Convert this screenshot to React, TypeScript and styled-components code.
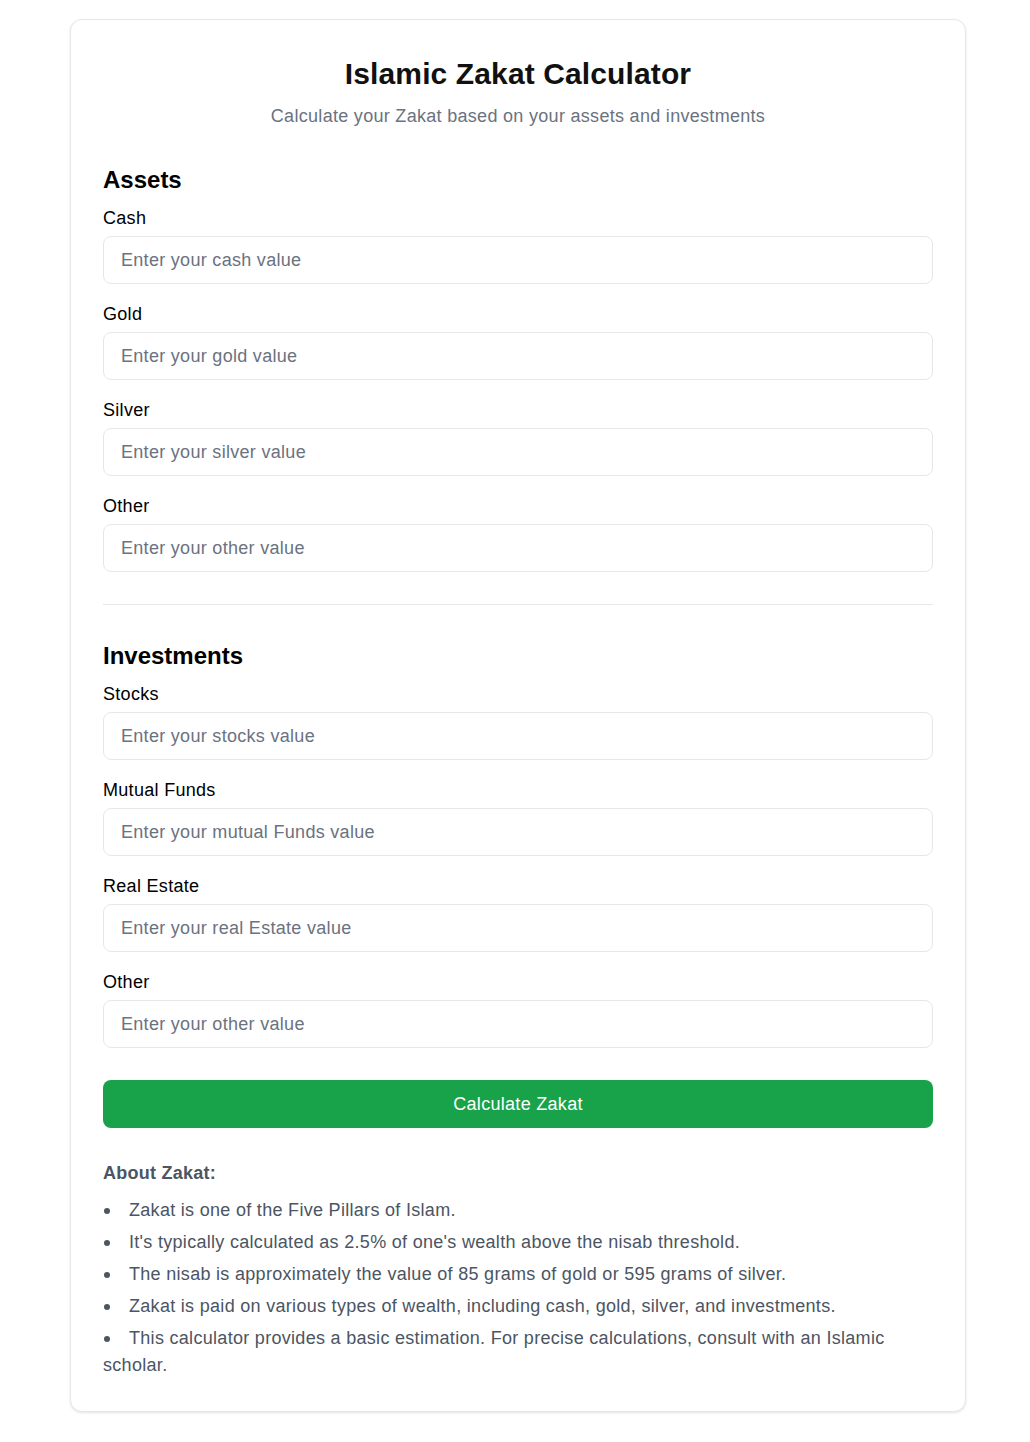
import React from "react";
import styled, { createGlobalStyle } from "styled-components";

const GlobalStyle = createGlobalStyle`
  * { box-sizing: border-box; }
  body {
    margin: 0;
    background: #ffffff;
    font-family: "Liberation Sans", Arial, Helvetica, sans-serif;
  }
`;

const Page = styled.div`
  display: flex;
  justify-content: center;
  padding: 19px 64px 30px 70px;
`;

const Card = styled.div`
  width: 100%;
  max-width: 896px;
  background: #ffffff;
  border: 1px solid #e5e7eb;
  border-radius: 12px;
  box-shadow: 0 1px 3px rgba(0, 0, 0, 0.08), 0 1px 2px rgba(0, 0, 0, 0.04);
  padding: 36px 32px 32px;
`;

const Header = styled.header`
  text-align: center;
  margin-bottom: 34px;
`;

const Title = styled.h1`
  margin: 0 0 10px;
  font-size: 30px;
  line-height: 36px;
  font-weight: 700;
  letter-spacing: 0.12px;
  color: #111111;
`;

const Subtitle = styled.p`
  margin: 0;
  font-size: 18px;
  line-height: 28px;
  letter-spacing: 0.3px;
  color: #6b7280;
`;

const Section = styled.section`
  display: flex;
  flex-direction: column;
`;

const SectionTitle = styled.h2`
  margin: 0 0 8px;
  font-size: 24px;
  line-height: 32px;
  font-weight: 700;
  color: #000000;
`;

const Field = styled.div`
  display: flex;
  flex-direction: column;
  gap: 4px;
  margin-bottom: 16px;
`;

const Label = styled.label`
  font-size: 18px;
  line-height: 28px;
  letter-spacing: 0.3px;
  color: #000000;
`;

const Input = styled.input`
  width: 100%;
  height: 48px;
  padding: 0 16px 0 17px;
  border: 1px solid #e5e7eb;
  border-radius: 8px;
  font-family: inherit;
  font-size: 18px;
  letter-spacing: 0.3px;
  color: #111827;
  background: #ffffff;
  outline: none;
  &::placeholder {
    color: #6b7280;
  }
`;

const Divider = styled.hr`
  border: none;
  border-top: 1px solid #e5e7eb;
  margin: 16px 0 35px;
`;

const Button = styled.button`
  width: 100%;
  height: 48px;
  margin-top: 16px;
  border: none;
  border-radius: 8px;
  background: #18a34a;
  color: #ffffff;
  font-family: inherit;
  font-size: 18px;
  letter-spacing: 0.3px;
  cursor: pointer;
`;

const About = styled.div`
  margin-top: 31px;
  color: #4b5563;
`;

const AboutTitle = styled.h3`
  margin: 0 0 10px;
  font-size: 18px;
  line-height: 28px;
  font-weight: 700;
  letter-spacing: 0.25px;
`;

const List = styled.ul`
  margin: 0;
  padding: 0;
  list-style: none;
  display: flex;
  flex-direction: column;
  gap: 5px;
`;

const Item = styled.li`
  font-size: 18px;
  line-height: 27px;
  letter-spacing: 0.3px;
`;

const Bullet = styled.span`
  display: inline-block;
  width: 26px;
  &::before {
    content: "";
    display: inline-block;
    width: 6px;
    height: 6px;
    margin-left: 1px;
    border-radius: 50%;
    background: currentColor;
    vertical-align: middle;
  }
`;

const assets = ["Cash", "Gold", "Silver", "Other"];
const investments = ["Stocks", "Mutual Funds", "Real Estate", "Other"];

const placeholderFor = (label: string) => {
  const words = label.split(" ");
  const first = words[0].toLowerCase();
  return `Enter your ${[first, ...words.slice(1)].join(" ")} value`;
};

const facts = [
  "Zakat is one of the Five Pillars of Islam.",
  "It's typically calculated as 2.5% of one's wealth above the nisab threshold.",
  "The nisab is approximately the value of 85 grams of gold or 595 grams of silver.",
  "Zakat is paid on various types of wealth, including cash, gold, silver, and investments.",
  "This calculator provides a basic estimation. For precise calculations, consult with an Islamic scholar.",
];

function FieldGroup({ title, items, prefix }: { title: string; items: string[]; prefix: string }) {
  return (
    <Section>
      <SectionTitle>{title}</SectionTitle>
      {items.map((label) => {
        const id = `${prefix}-${label.replace(/\s+/g, "-").toLowerCase()}`;
        return (
          <Field key={id}>
            <Label htmlFor={id}>{label}</Label>
            <Input id={id} type="text" placeholder={placeholderFor(label)} />
          </Field>
        );
      })}
    </Section>
  );
}

export default function App() {
  return (
    <>
      <GlobalStyle />
      <Page>
        <Card>
          <Header>
            <Title>Islamic Zakat Calculator</Title>
            <Subtitle>Calculate your Zakat based on your assets and investments</Subtitle>
          </Header>
          <FieldGroup title="Assets" items={assets} prefix="assets" />
          <Divider />
          <FieldGroup title="Investments" items={investments} prefix="investments" />
          <Button type="button">Calculate Zakat</Button>
          <About>
            <AboutTitle>About Zakat:</AboutTitle>
            <List>
              {facts.map((f) => (
                <Item key={f}>
                  <Bullet aria-hidden="true" />
                  {f}
                </Item>
              ))}
            </List>
          </About>
        </Card>
      </Page>
    </>
  );
}
